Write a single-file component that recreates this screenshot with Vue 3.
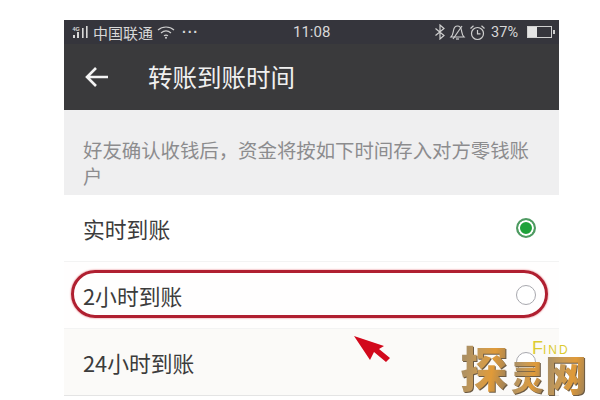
<template>
  <div class="page">
    <div class="phone">
      <!-- status bar -->
      <div class="status">
        <div class="status-left">
          <svg class="signal" width="20" height="14" viewBox="0 0 20 14">
            <rect x="1" y="10" width="2" height="3" />
            <rect x="5" y="7" width="2" height="6" />
            <rect x="10" y="3" width="1.6" height="10" />
            <rect x="14" y="1" width="1.6" height="12" />
            <text x="0.500" y="6" font-size="5.500" font-weight="700">4G</text>
          </svg>
          <span class="carrier">中国联通</span>
          <svg class="wifi" width="18" height="14" viewBox="0 0 18 14" fill="none">
            <path d="M1 5 C5.500 1 12.500 1 17 5" />
            <path d="M4 8 C7 5.500 11 5.500 14 8" />
            <path d="M7 10.800 C8.200 10 9.800 10 11 10.800" />
            <circle cx="9" cy="12.800" r="1" class="dot" />
          </svg>
          <span class="dots">···</span>
        </div>
        <span class="clock">11:08</span>
        <div class="status-right">
          <svg width="12" height="16" viewBox="0 0 12 16" fill="none">
            <path d="M1.500 4.500 L10 11.500 L6 15 V1 L10 4.500 L1.500 11.500" />
          </svg>
          <svg width="17" height="17" viewBox="0 0 17 17" fill="none">
            <path d="M2 13 C4 11 4 9 4.500 6.500 C5 3.500 7 2 8.500 2 C10.500 2 12 3.500 12.500 6.500 C13 9 13 11 15 13 Z" />
            <path d="M4 15 L13 2" />
            <path d="M7 15 H10" />
          </svg>
          <svg width="17" height="17" viewBox="0 0 17 17" fill="none">
            <circle cx="8.500" cy="9.500" r="6" />
            <path d="M8.500 6 V9.800 H11.500" />
            <path d="M1.500 4.500 L4.500 1.800 M15.500 4.500 L12.500 1.800" />
          </svg>
          <span class="pct">37%</span>
          <div class="battery"><div class="level" :style="{ width: batteryLevel + '%' }"></div></div>
        </div>
      </div>

      <!-- nav bar -->
      <div class="nav">
        <svg class="back" width="24" height="22" viewBox="0 0 24 22" fill="none">
          <path d="M23 11 H2 M11 2 L2 11 L11 20" />
        </svg>
        <span class="title">转账到账时间</span>
      </div>

      <div class="hint">好友确认收钱后，资金将按如下时间存入对方零钱账户</div>

      <div class="list">
        <div v-for="row in rows" :key="row.label" class="row" :class="{ circled: row.circled }">
          <span>{{ row.label }}</span>
          <span class="radio" :class="{ on: row.on }"></span>
        </div>
      </div>

      <!-- red arrow added on the screenshot -->
      <svg class="arrow" width="40" height="30" viewBox="0 0 40 30">
        <path d="M1 1 L31 11 L26 14 L37 23 L33 27 L21 17 L17 25 Z" fill="#d2091c" />
      </svg>
    </div>

    <div class="mark">
      <span class="find">F<small>IND</small></span>
      <span class="logo big">探</span>
      <span class="logo small">灵</span>
      <span class="logo wide">网</span>
    </div>
  </div>
</template>

<script setup>
const batteryLevel = 37

const rows = [
  { label: '实时到账', on: true },
  { label: '2小时到账', circled: true },
  { label: '24小时到账' }
]
</script>

<style>
html,
body {
  margin: 0;
  background: #fff;
}
</style>

<style scoped>
.page {
  position: relative;
  width: 600px;
  height: 400px;
  overflow: hidden;
  padding-top: 20px;
  box-sizing: border-box;
  background: #fff;
  font-family: "Noto Sans CJK SC", "Liberation Sans", sans-serif;
}

.phone {
  position: relative;
  width: 495px;
  margin-left: 64px;
}

.status {
  height: 24px;
  display: flex;
  align-items: center;
  justify-content: space-between;
  padding: 0 7px 0 8px;
  background: #35353c;
  color: #d8d8d8;
  font-size: 14px;
  position: relative;
}

.status-left,
.status-right {
  display: flex;
  align-items: center;
}

.status svg {
  stroke: #cfcfcf;
  stroke-width: 1.200;
}

.signal {
  fill: #d8d8d8;
  stroke: none !important;
  margin-right: 1px;
  font-family: "Liberation Sans", sans-serif;
}

.carrier {
  font-size: 15px;
}

.wifi {
  margin-left: 4px;
}

.wifi .dot {
  fill: #cfcfcf;
  stroke: none;
}

.dots {
  margin-left: 7px;
  letter-spacing: 1px;
  font-family: "Liberation Sans", sans-serif;
  font-weight: 700;
}

.clock {
  position: absolute;
  left: 229px;
  font-family: Roboto, "Liberation Sans", sans-serif;
  font-size: 15px;
}

.status-right {
  gap: 3px;
}

.pct {
  font-family: Roboto, "Liberation Sans", sans-serif;
  font-size: 14.500px;
  margin: 0 6px 0 2px;
}

.battery {
  position: relative;
  width: 23px;
  height: 10px;
  border: 1px solid #d0d0d0;
  background: #35353c;
}

.battery::after {
  content: "";
  position: absolute;
  right: -4px;
  top: 3px;
  width: 2px;
  height: 4px;
  background: #d0d0d0;
}

.level {
  height: 100%;
  background: #e4e4e4;
}

.nav {
  height: 66px;
  display: flex;
  align-items: center;
  padding-left: 21px;
  background: #3a3a3c;
  color: #f0f0f0;
}

.back {
  stroke: #f4f4f4;
  stroke-width: 2.600;
  margin-right: 39px;
}

.title {
  font-size: 24.500px;
  line-height: 1;
}

.hint {
  height: 85px;
  box-sizing: border-box;
  padding: 27px 19px 0;
  background: #efeff0;
  color: #8c8c8e;
  font-size: 19.400px;
  line-height: 26px;
}

.list {
  background: #fff;
  border-bottom: 1px solid #e4e4e4;
}

.row {
  position: relative;
  height: 66px;
  display: flex;
  align-items: center;
  justify-content: space-between;
  padding: 0 23px 0 19px;
  color: #3c3c3c;
  font-size: 21.800px;
}

.row + .row {
  border-top: 1px solid #f3f3f3;
}

.row.circled {
  background: #fffefe;
}

/* hand-drawn red ring around the second row */
.row.circled::before {
  content: "";
  position: absolute;
  left: 7px;
  right: 11px;
  top: 8px;
  height: 42px;
  border: 3px solid #b01f30;
  border-radius: 24px;
  box-shadow: 0 0 2px #e0606a;
}

.row:last-child {
  background: #fbfaf8;
}

.radio {
  width: 20px;
  height: 20px;
  box-sizing: border-box;
  border: 1.500px solid #a8a8ae;
  border-radius: 50%;
  background: #fff;
}

.radio.on {
  border: 2px solid #4f9a62;
  background: #1fa23a;
  box-shadow: inset 0 0 0 2px #fff;
}

.arrow {
  position: absolute;
  left: 289px;
  top: 315px;
}

.mark {
  position: absolute;
  left: 460px;
  top: 340px;
  width: 128px;
  height: 55px;
}

.logo {
  position: absolute;
  font-weight: 900;
  line-height: 1.300;
  white-space: nowrap;
  background: linear-gradient(100deg, #9c8a6c 0%, #c89a55 40%, #e09a38 65%, #8f7c60 100%);
  -webkit-background-clip: text;
  background-clip: text;
  color: transparent;
  filter: drop-shadow(1px 1px 0 #6b5a44);
}

.big {
  left: 0;
  top: -5px;
  font-size: 48px;
}

.small {
  left: 51px;
  top: 15px;
  font-size: 33px;
}

.wide {
  left: 85px;
  top: 6px;
  font-size: 42px;
}

.find {
  position: absolute;
  left: 72px;
  top: 0;
  z-index: 1;
  font-family: "Liberation Sans", sans-serif;
  font-size: 18px;
  line-height: 16px;
  color: #dccb30;
}

.find small {
  font-size: 12px;
  letter-spacing: 2px;
}
</style>
